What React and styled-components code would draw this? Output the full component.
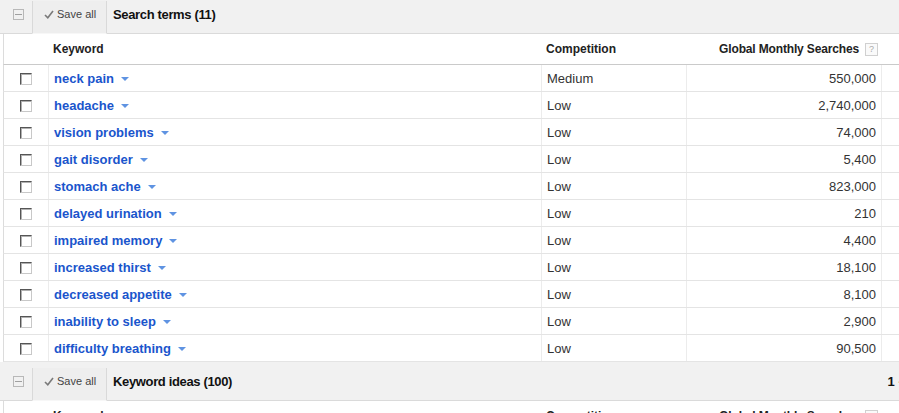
import React from 'react';
import styled, { createGlobalStyle } from 'styled-components';

const GlobalStyle = createGlobalStyle`
  html, body {
    margin: 0;
    padding: 0;
    background: #fff;
    overflow: hidden;
  }
  body {
    font-family: "Liberation Sans", Arial, sans-serif;
    color: #222;
  }
`;

const searchTerms = [
  { keyword: 'neck pain', competition: 'Medium', searches: '550,000' },
  { keyword: 'headache', competition: 'Low', searches: '2,740,000' },
  { keyword: 'vision problems', competition: 'Low', searches: '74,000' },
  { keyword: 'gait disorder', competition: 'Low', searches: '5,400' },
  { keyword: 'stomach ache', competition: 'Low', searches: '823,000' },
  { keyword: 'delayed urination', competition: 'Low', searches: '210' },
  { keyword: 'impaired memory', competition: 'Low', searches: '4,400' },
  { keyword: 'increased thirst', competition: 'Low', searches: '18,100' },
  { keyword: 'decreased appetite', competition: 'Low', searches: '8,100' },
  { keyword: 'inability to sleep', competition: 'Low', searches: '2,900' },
  { keyword: 'difficulty breathing', competition: 'Low', searches: '90,500' },
];

const COLUMNS = '45px 493px 145px 195px 1fr';

const Page = styled.div`
  width: 1000px;
  margin-top: -5px;
`;

const Toolbar = styled.div`
  display: flex;
  align-items: stretch;
  height: 38px;
  background: #f1f1f1;
  border-bottom: 1px solid #dadada;
`;

const CollapseCell = styled.div`
  width: 32px;
  display: flex;
  align-items: center;
  padding-left: 13px;
  box-sizing: border-box;
  padding-top: 1px;
`;

const CollapseBox = styled.div`
  width: 9px;
  height: 9px;
  border: 1px solid #b8b8b8;
  display: flex;
  align-items: center;
  justify-content: center;

  &::after {
    content: '';
    width: 7px;
    height: 1px;
    background: #a0a0a0;
  }
`;

const SaveButton = styled.div`
  margin-top: 6px;
  margin-bottom: -1px;
  padding-bottom: 6px;
  width: 75px;
  box-sizing: border-box;
  display: flex;
  align-items: center;
  gap: 3px;
  padding-left: 11px;
  background: #eeeeee;
  border-left: 1px solid #d9d9d9;
  border-right: 1px solid #d9d9d9;
  border-bottom: 1px solid #f7f7f7;
  font-size: 11px;
  color: #444;
`;

const Check = styled.svg`
  width: 10px;
  height: 9px;
  margin-top: 1px;
`;

const Title = styled.div`
  display: flex;
  align-items: center;
  padding-left: 6px;
  font-size: 13px;
  font-weight: bold;
  letter-spacing: -0.35px;
  color: #111;
`;

const Pager = styled.div`
  margin-left: auto;
  padding-right: 38px;
  display: flex;
  align-items: center;
  font-size: 13px;
  font-weight: bold;
  color: #111;
`;

const HeaderRow = styled.div`
  display: grid;
  grid-template-columns: ${COLUMNS};
  height: 31px;
  box-sizing: border-box;
  margin-left: 3px;
  border-left: 1px solid #dcdcdc;
  border-bottom: 1px solid #cacaca;
`;

const HeaderCell = styled.div`
  display: flex;
  align-items: center;
  justify-content: ${(p) => (p.$right ? 'flex-end' : 'flex-start')};
  padding: 0 4px;
  font-size: 12px;
  font-weight: bold;
  letter-spacing: ${(p) => (p.$right ? '-0.15px' : '0')};
  color: #222;
  gap: 6px;
`;

const Help = styled.span`
  width: 11px;
  height: 11px;
  border: 1px solid #d0d0d0;
  background: #fafafa;
  color: #aaa;
  font-size: 9px;
  font-weight: normal;
  display: flex;
  align-items: center;
  justify-content: center;
  line-height: 1;
`;

const Row = styled.div`
  display: grid;
  grid-template-columns: ${COLUMNS};
  height: 27px;
  box-sizing: border-box;
  margin-left: 3px;
  border-left: 1px solid #dcdcdc;
  border-bottom: 1px solid #e4e4e4;
`;

const Cell = styled.div`
  display: flex;
  align-items: center;
  justify-content: ${(p) => (p.$center ? 'center' : p.$right ? 'flex-end' : 'flex-start')};
  padding: 0 ${(p) => (p.$center ? '0' : '5px')};
  box-sizing: border-box;
  border-right: ${(p) => (p.$last ? 'none' : '1px solid #ececec')};
  font-size: 13px;
  color: #333;
  min-width: 0;
`;

const Checkbox = styled.span`
  width: 12px;
  height: 12px;
  box-sizing: border-box;
  border: 1px solid;
  border-color: #555 #c8c8c8 #c8c8c8 #555;
  box-shadow: inset 1px 1px 0 #b0b0b0;
  background: #fff;
  margin-top: 1px;
`;

const KeywordLink = styled.a`
  font-weight: bold;
  color: #1a55cc;
  text-decoration: none;
  display: flex;
  align-items: center;
  white-space: nowrap;
`;

const Caret = styled.span`
  margin-left: 7px;
  width: 0;
  height: 0;
  border-left: 4px solid transparent;
  border-right: 4px solid transparent;
  border-top: 4px solid #5f93e2;
  margin-top: 1px;
`;

const Section = ({ title, pager, rows }) => (
  <>
    <Toolbar>
      <CollapseCell>
        <CollapseBox />
      </CollapseCell>
      <SaveButton>
        <Check viewBox="0 0 10 9">
          <path d="M1 5 L3.8 7.8 L9 1" fill="none" stroke="#7a7a7a" strokeWidth="1.6" />
        </Check>
        Save all
      </SaveButton>
      <Title>{title}</Title>
      {pager && <Pager>{pager}</Pager>}
    </Toolbar>
    <HeaderRow>
      <HeaderCell />
      <HeaderCell>Keyword</HeaderCell>
      <HeaderCell>Competition</HeaderCell>
      <HeaderCell $right>
        Global Monthly Searches
        <Help>?</Help>
      </HeaderCell>
      <HeaderCell />
    </HeaderRow>
    {rows.map((r) => (
      <Row key={r.keyword}>
        <Cell $center>
          <Checkbox />
        </Cell>
        <Cell>
          <KeywordLink href="#">
            {r.keyword}
            <Caret />
          </KeywordLink>
        </Cell>
        <Cell>{r.competition}</Cell>
        <Cell $right>{r.searches}</Cell>
        <Cell $last />
      </Row>
    ))}
  </>
);

export default function App() {
  return (
    <Page>
      <GlobalStyle />
      <Section title="Search terms (11)" rows={searchTerms} />
      <Section title="Keyword ideas (100)" pager="1 - 50 of 100" rows={[]} />
    </Page>
  );
}
